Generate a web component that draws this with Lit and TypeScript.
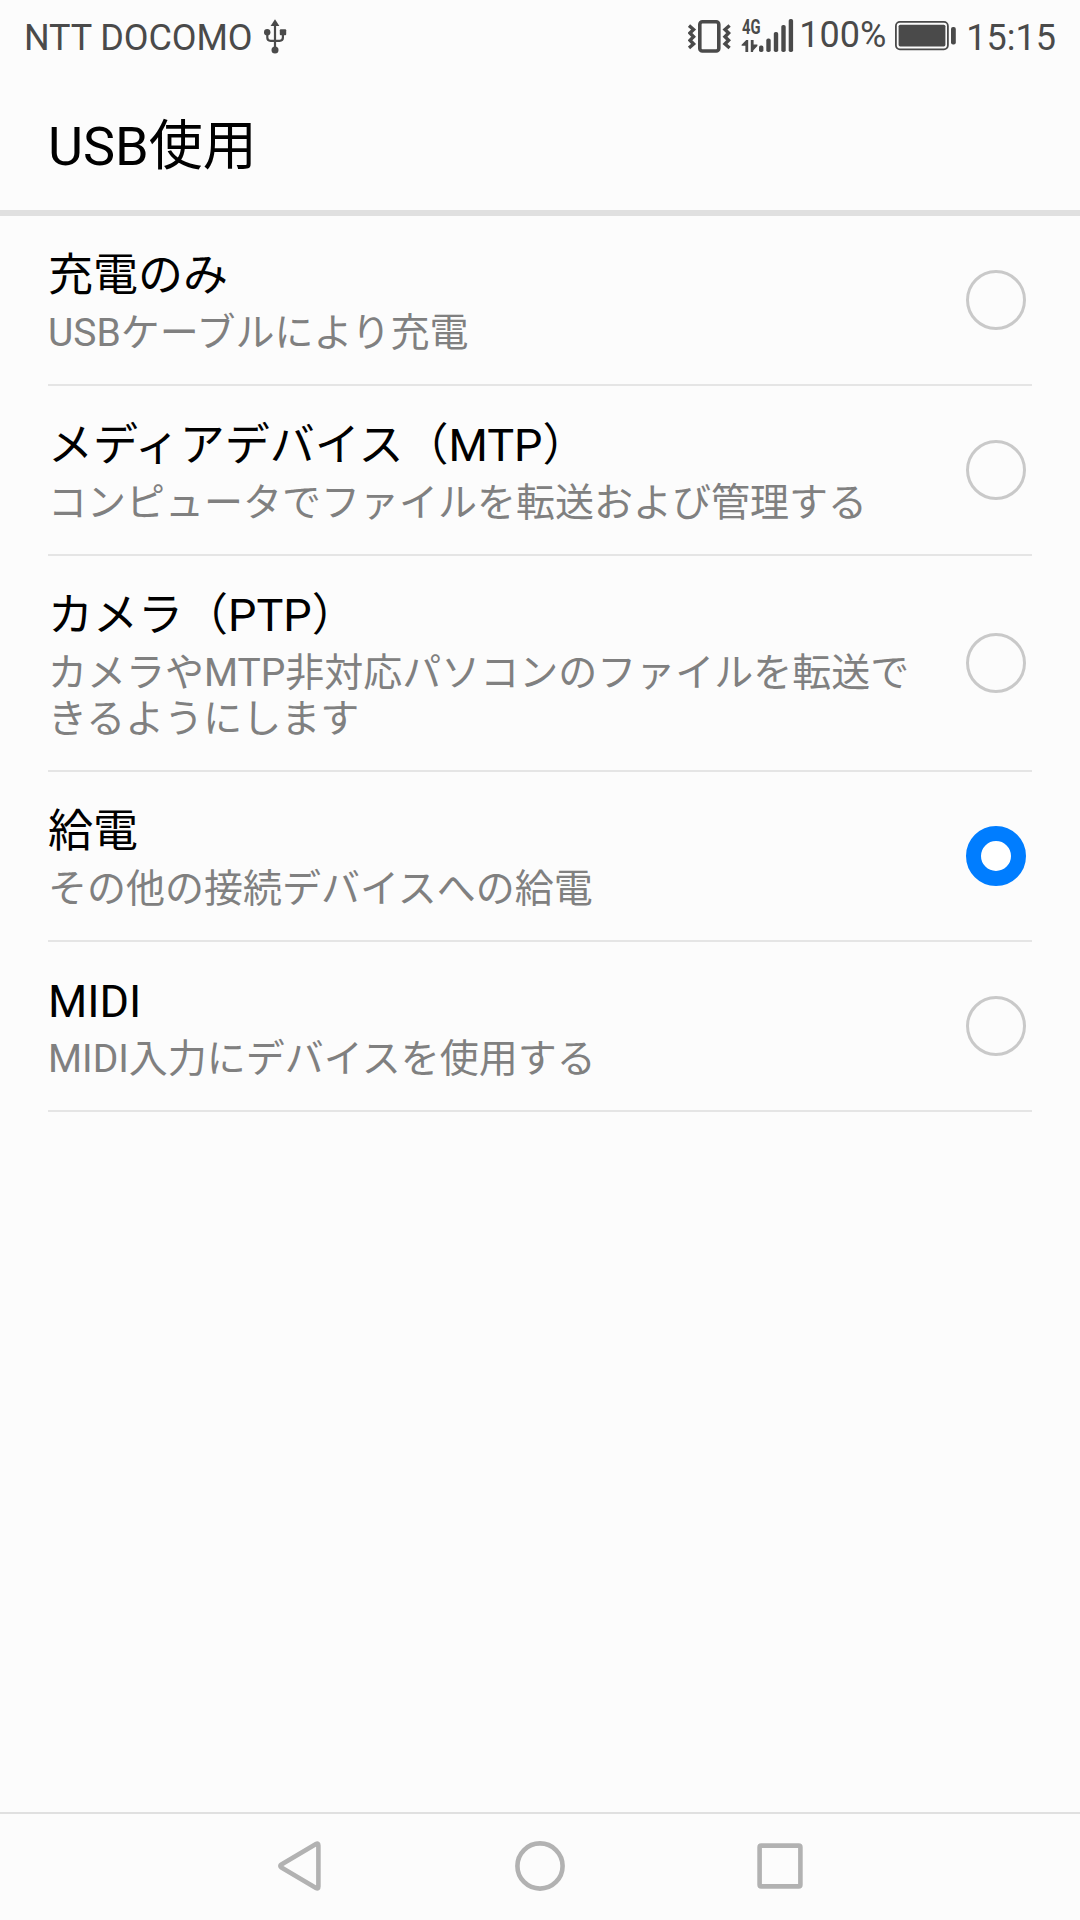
import { LitElement, html, css, nothing } from "lit";
import { customElement, property, state } from "lit/decorators.js";
import { classMap } from "lit/directives/class-map.js";

interface UsbMode {
  id: string;
  title: string;
  summary: string;
}

const MODES: UsbMode[] = [
  { id: "charge", title: "充電のみ", summary: "USBケーブルにより充電" },
  { id: "mtp", title: "メディアデバイス（MTP）", summary: "コンピュータでファイルを転送および管理する" },
  { id: "ptp", title: "カメラ（PTP）", summary: "カメラやMTP非対応パソコンのファイルを転送できるようにします" },
  { id: "supply", title: "給電", summary: "その他の接続デバイスへの給電" },
  { id: "midi", title: "MIDI", summary: "MIDI入力にデバイスを使用する" },
];

@customElement("status-bar")
export class StatusBar extends LitElement {
  static styles = css`
    :host {
      display: flex;
      align-items: flex-start;
      height: 72px;
      padding: 0 24px;
      box-sizing: border-box;
      color: #4a4a4a;
      font-size: 36px;
      line-height: 42px;
      white-space: nowrap;
    }
    .label { margin-top: 17px; }
    .carrier { letter-spacing: -0.1px; }
    .percent { margin-top: 14px; margin-left: 4px; }
    .spacer { flex: 1; }
    svg { display: block; flex: none; fill: #4a4a4a; }
    .usb { margin: 18px 0 0 11px; }
    .vibrate { margin-top: 18px; }
    .signal { margin: 10px 0 0 10px; overflow: visible; }
    .battery { margin: 20px 9px 0 9px; }
    .line { fill: none; stroke: #4a4a4a; }
    .net { font: 700 20.5px Roboto, "Liberation Sans", sans-serif; }
  `;

  render() {
    return html`
      <span class="label carrier">NTT DOCOMO</span>
      <svg class="usb" width="24" height="36" viewBox="0 0 24 36">
        <path d="M12 1.2 L16.4 8 H7.6 Z" />
        <path class="line" stroke-width="2.2" d="M12 6V32M4.3 15V19.5Q4.3 22.8 7.6 22.8H16.6Q19.9 22.8 19.9 19.5V15" />
        <circle cx="4.2" cy="14.3" r="3.2" />
        <rect x="16.8" y="11.2" width="6.4" height="6" rx="1" />
        <circle cx="12" cy="32" r="3.5" />
      </svg>
      <span class="spacer"></span>
      <svg class="vibrate" width="43" height="36" viewBox="0 0 43 36">
        <rect class="line" stroke-width="3.6" x="11.8" y="3.8" width="19" height="29.2" rx="2.6" />
        <path class="line" stroke-width="3.4" d="M1 7.5L5.6 11.5L2 15L5.6 18.7L2 22.3L5.6 26L1 30" />
        <path class="line" stroke-width="3.4" d="M41.6 7.5L37 11.5L40.6 15L37 18.7L40.6 22.3L37 26L41.6 30" />
      </svg>
      <svg class="signal" width="54" height="44" viewBox="0 -8 54 44">
        <text class="net" x="1" y="15.8" textLength="18.5" lengthAdjust="spacingAndGlyphs">4G</text>
        <path d="M7.2 22V34H4.4V27.8H0.6V26.8L5.2 22ZM9.8 22H12.6V26.4H16.4V28L12.4 32.2L12 34H9.8Z" />
        <rect x="18" y="27.6" width="4.4" height="6.4" rx="1.8" />
        <rect x="25.3" y="20.6" width="4.4" height="13.4" rx="1.8" />
        <rect x="32.8" y="14" width="4.4" height="20" rx="1.8" />
        <rect x="40.3" y="7" width="4.4" height="27" rx="1.8" />
        <rect x="47.7" y="1" width="4.4" height="33" rx="1.8" />
      </svg>
      <span class="percent">100%</span>
      <svg class="battery" width="62" height="32" viewBox="0 0 62 32">
        <rect class="line" stroke-width="1.8" x="0.9" y="1.9" width="52" height="27.4" rx="4" />
        <rect x="3.6" y="4.7" width="46.8" height="21.7" rx="1.6" />
        <rect x="56" y="7" width="4.8" height="17.4" rx="2" />
      </svg>
      <span class="label">15:15</span>
    `;
  }
}

@customElement("usb-option")
export class UsbOption extends LitElement {
  @property() heading = "";
  @property() summary = "";
  @property({ type: Boolean }) selected = false;

  static styles = css`
    :host {
      display: flex;
      align-items: center;
      margin: 0 48px;
      border-bottom: 2px solid #e5e5e5;
      cursor: pointer;
    }
    .text {
      flex: 1;
      min-width: 0;
      padding: 33px 42px 28px 0;
    }
    .heading {
      color: #000;
      font-size: 45px;
      line-height: 53px;
      margin-bottom: 8px;
    }
    .summary {
      color: #808080;
      font-size: 39px;
      line-height: 46px;
    }
    .radio {
      flex: none;
      box-sizing: border-box;
      width: 60px;
      height: 60px;
      margin-right: 6px;
      border: 3px solid #c9c9c9;
      border-radius: 50%;
    }
    .radio.on {
      border: 15px solid #007dff;
      background: #fff;
    }
  `;

  render() {
    return html`
      <div class="text">
        <div class="heading">${this.heading}</div>
        ${this.summary ? html`<div class="summary">${this.summary}</div>` : nothing}
      </div>
      <div class=${classMap({ radio: true, on: this.selected })}></div>
    `;
  }
}

@customElement("nav-bar")
export class NavBar extends LitElement {
  static styles = css`
    :host {
      display: flex;
      justify-content: center;
      height: 108px;
      box-sizing: border-box;
      padding-top: 25px;
      border-top: 2px solid #e0e0e0;
    }
    .key { width: 240px; display: flex; justify-content: center; }
    svg { display: block; fill: none; stroke: #b2b2b2; stroke-width: 4.6; stroke-linejoin: round; }
  `;

  render() {
    return html`
      <div class="key">
        <svg width="54" height="54" viewBox="0 0 54 54"><path d="M45.4 6.4V47.6Q45.4 50.4 43 49.1L8.4 28.5Q6.2 27 8.4 25.5L43 4.9Q45.4 3.6 45.4 6.4Z" /></svg>
      </div>
      <div class="key">
        <svg width="54" height="54" viewBox="0 0 54 54"><circle cx="27" cy="27" r="22.6" /></svg>
      </div>
      <div class="key">
        <svg width="54" height="54" viewBox="0 0 54 54"><rect x="6.6" y="6.6" width="40.8" height="40.8" rx="1.6" /></svg>
      </div>
    `;
  }
}

@customElement("app-root")
export class AppRoot extends LitElement {
  @state() private mode = "supply";

  static styles = css`
    :host {
      display: flex;
      flex-direction: column;
      width: 1080px;
      height: 1920px;
      overflow: hidden;
      background: #fcfcfc;
      font-family: Roboto, "Noto Sans CJK JP", sans-serif;
    }
    .header {
      height: 144px;
      box-sizing: border-box;
      padding: 43px 48px 0;
      border-bottom: 6px solid #e0e0e0;
      color: #000;
      font-size: 54px;
      line-height: 64px;
    }
    .list { flex: 1; }
  `;

  render() {
    return html`
      <status-bar></status-bar>
      <div class="header">USB使用</div>
      <div class="list">
        ${MODES.map(
          (m) => html`<usb-option
            .heading=${m.title}
            .summary=${m.summary}
            .selected=${m.id === this.mode}
            @click=${() => (this.mode = m.id)}
          ></usb-option>`,
        )}
      </div>
      <nav-bar></nav-bar>
    `;
  }
}
